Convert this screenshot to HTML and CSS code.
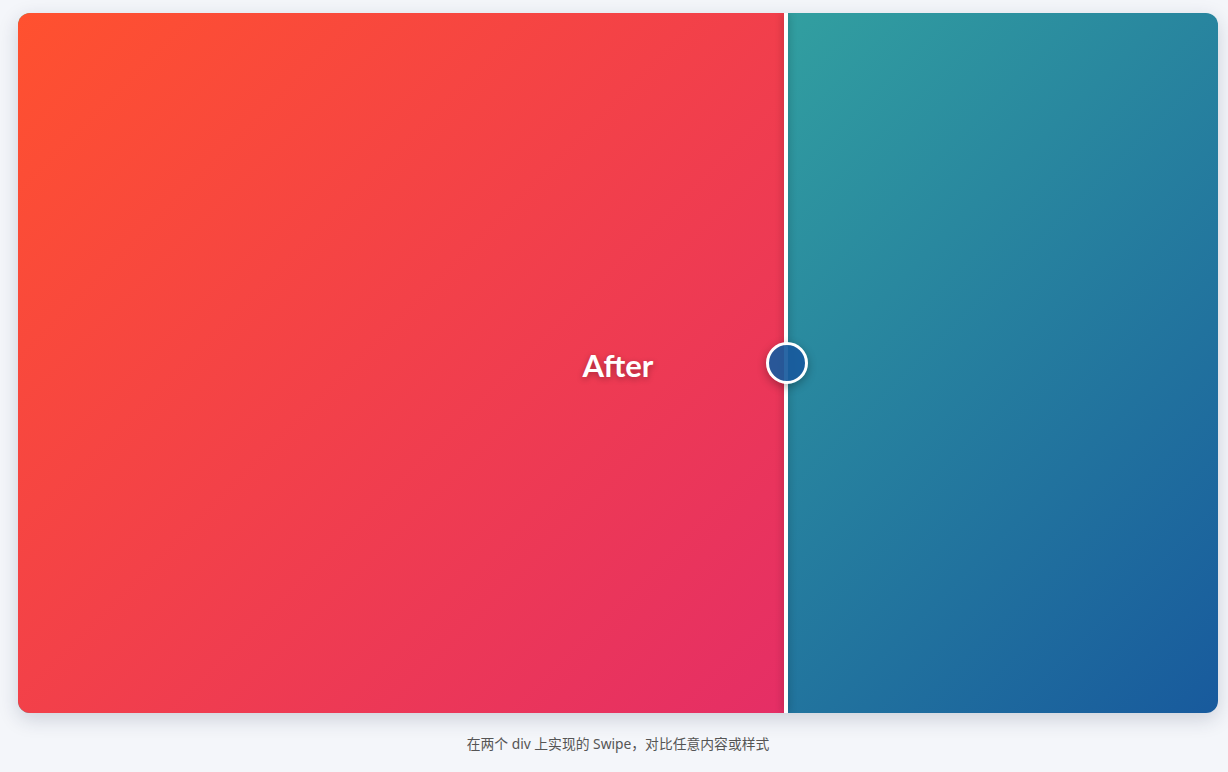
FILE: index.html
```html
<!DOCTYPE html>
<html lang="zh-CN">
<head>
    <meta charset="UTF-8">
    <meta name="viewport" content="width=device-width, initial-scale=1.0">
    <title>Swipe 对比</title>
    <link rel="stylesheet" href="styles.css">
</head>
<body>
    <div class="page">
        <div class="swipe" id="swipe">
            <div class="pane before"></div>
            <div class="pane after">
                <span class="label">After</span>
            </div>
            <div class="divider">
                <div class="handle"></div>
            </div>
        </div>
        <p class="caption">在两个 div 上实现的 Swipe，对比任意内容或样式</p>
    </div>
</body>
</html>
```

FILE: styles.css
```css
body {
    margin: 0;
    background-color: #f4f6fa;
    font-family: 'Segoe UI', 'Noto Sans', 'Noto Sans CJK SC', sans-serif;
    color: #555;
}

.page {
    padding: 13px 10px 0 18px;
}

.swipe {
    position: relative; /* layers stack on top of each other */
    width: 1200px;
    height: 700px;
    border-radius: 12px;
    overflow: hidden;
    box-shadow: 0 6px 20px rgba(30, 40, 70, 0.18);
}

.pane {
    position: absolute;
    inset: 0;
    display: flex;
    justify-content: center;
    align-items: center;
}

.before {
    background: linear-gradient(135deg, #43cea2, #185a9d);
}

.after {
    background: linear-gradient(135deg, #ff512f, #dd2476);
    clip-path: inset(0 36% 0 0); /* 64% visible */
}

.label {
    font-family: Lato, 'Open Sans', sans-serif;
    font-weight: 700;
    font-size: 31px;
    color: #fff;
    text-shadow: 0 2px 6px rgba(0, 0, 0, 0.3);
    margin-top: 4px;
}

.divider {
    position: absolute;
    top: 0;
    bottom: 0;
    left: 64%;
    width: 4px;
    margin-left: -2px;
    background-color: #fff;
    box-shadow: 0 0 8px rgba(0, 0, 0, 0.3);
}

.handle {
    position: absolute;
    top: 329px;
    left: 50%;
    width: 36px;
    height: 36px;
    margin-left: -20px;
    border: 3px solid #fff;
    border-radius: 50%;
    background-color: rgba(24, 90, 157, 0.92);
    box-shadow: 0 3px 10px rgba(0, 0, 0, 0.3);
}

.caption {
    margin: 22px 0 0;
    text-align: center;
    font-size: 13.8px;
    line-height: 18px;
    color: #555;
}
```
